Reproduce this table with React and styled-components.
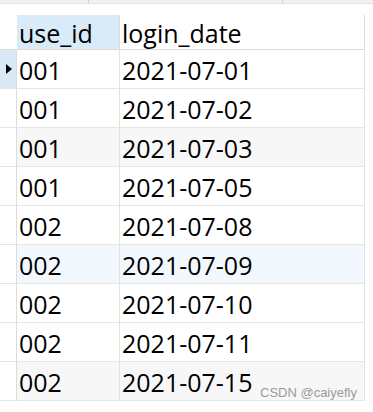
import styled, { createGlobalStyle } from 'styled-components';

const rows = [
	{ id: '001', date: '2021-07-01', current: true },
	{ id: '001', date: '2021-07-02' },
	{ id: '001', date: '2021-07-03', tone: 'gray' },
	{ id: '001', date: '2021-07-05' },
	{ id: '002', date: '2021-07-08' },
	{ id: '002', date: '2021-07-09', tone: 'blue' },
	{ id: '002', date: '2021-07-10' },
	{ id: '002', date: '2021-07-11' },
	{ id: '002', date: '2021-07-15', tone: 'gray' },
];

const tones = {
	gray: '#f7f7f7',
	blue: '#f2f8fd',
};

export default function App() {
	return (
		<Page>
			<GlobalStyle />
			<TabStrip>
				<TabEdge $left={88} />
				<TabEdge $left={193} />
			</TabStrip>

			<Grid>
				<Gutter $head />
				<HeadCell $active>use_id</HeadCell>
				<HeadCell>login_date</HeadCell>

				{rows.map((row, index) => (
					<Row key={index}>
						<Gutter $current={row.current}>{row.current && <Pointer />}</Gutter>
						<Cell $tone={row.tone}>{row.id}</Cell>
						<Cell $tone={row.tone}>{row.date}</Cell>
					</Row>
				))}
			</Grid>

			<Watermark>CSDN @caiyefly</Watermark>
		</Page>
	);
}

const GlobalStyle = createGlobalStyle`
	body {
		margin: 0;
		background: #ffffff;
	}
`;

const Page = styled.div`
	position: relative;
	width: 373px;
	height: 412px;
	overflow: hidden;
	font-family: 'Open Sans', 'Noto Sans', sans-serif;
	color: #000000;
`;

const TabStrip = styled.div`
	display: flex;
	height: 3px;
	background: #f0f0f0;
	border-bottom: 1px solid #e2e2e2;
	margin-bottom: 11px;
`;

const TabEdge = styled.div`
	width: 1px;
	margin-left: ${({ $left }) => $left}px;
	background: #d2d2d2;
`;

const Grid = styled.div`
	display: grid;
	grid-template-columns: 17px 103px 245px;
	grid-auto-rows: 39px;
	grid-template-rows: 35px;
`;

const Row = styled.div`
	display: contents;
`;

const Gutter = styled.div`
	display: flex;
	align-items: center;
	justify-content: center;
	box-sizing: border-box;
	border-right: 1px solid #dcdcdc;
	border-bottom: 1px solid #e6e6e6;
	background: ${({ $current }) => ($current ? '#dbe9f7' : '#ffffff')};
	${({ $head }) => $head && `border-right: none; border-bottom: 1px solid #dcdcdc;`}
`;

const Pointer = styled.span`
	flex: none;
	width: 0;
	height: 0;
	margin-left: 2px;
	border-top: 5px solid transparent;
	border-bottom: 5px solid transparent;
	border-left: 6px solid #000000;
`;

const HeadCell = styled.div`
	display: flex;
	align-items: center;
	box-sizing: border-box;
	padding-left: 2px;
	padding-top: 1px;
	font-size: 25px;
	background: ${({ $active }) => ($active ? '#d9eaf8' : '#ffffff')};
	border-right: 1px solid #dcdcdc;
	border-bottom: 1px solid #dcdcdc;
`;

const Cell = styled.div`
	display: flex;
	align-items: center;
	box-sizing: border-box;
	padding-left: 2px;
	padding-top: 1px;
	font-size: 25px;
	background: ${({ $tone }) => tones[$tone] || '#ffffff'};
	border-right: 1px solid #e2e2e2;
	border-bottom: 1px solid #e6e6e6;
`;

const Watermark = styled.div`
	position: absolute;
	right: 16px;
	top: 385px;
	font-family: 'Liberation Sans', Arial, sans-serif;
	font-size: 13px;
	color: #9a9a9a;
`;
